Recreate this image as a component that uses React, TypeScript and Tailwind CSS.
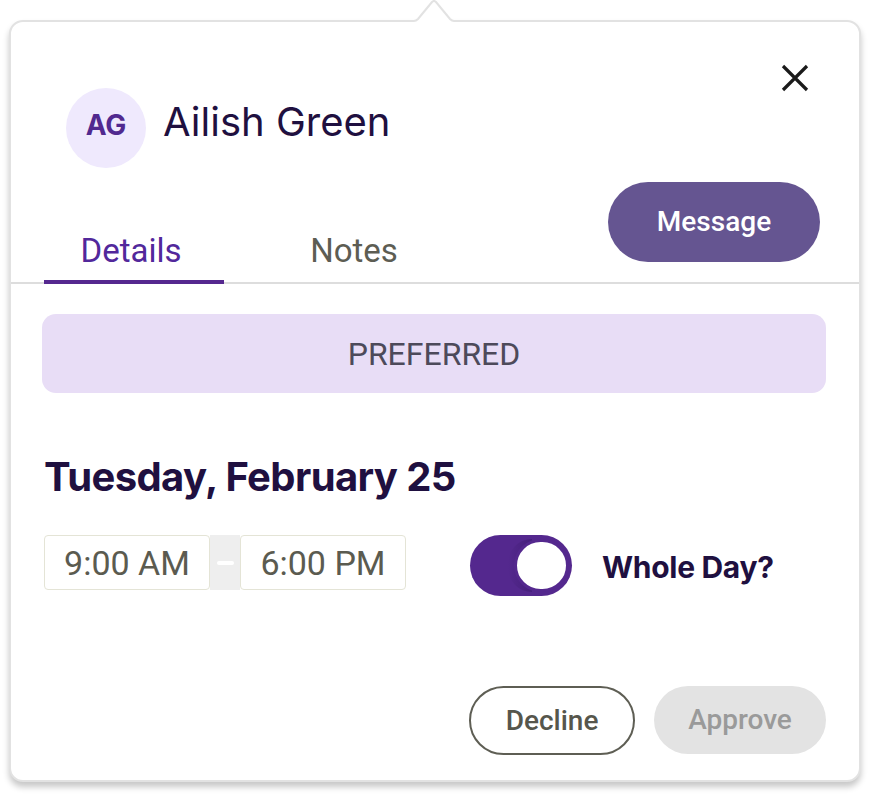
import React from "react";

export default function App() {
  const inter = { fontFamily: "Inter, 'Noto Sans', sans-serif" };
  const roboto = { fontFamily: "Roboto, 'Noto Sans', sans-serif" };
  return (
    <div className="w-[870px] h-[800px] bg-white overflow-hidden">
      <div className="pl-[9px] pt-[20px]">
        <div className="relative w-[852px] h-[762px] bg-white border-2 border-[#e2e2e2] rounded-[14px] shadow-[0_5px_6px_rgba(0,0,0,0.22)]">
          {/* arrow */}
          <svg className="absolute left-[398px] top-[-22px]" width="50" height="24" viewBox="0 0 50 24">
            <path d="M0 24 L0 21 L5 21 Q7 21 9 19 L23 2 Q25 0 27 2 L41 19 Q43 21 45 21 L50 21 L50 24 Z" fill="#ffffff" />
            <path d="M0 21 L5 21 Q7 21 9 19 L23 2 Q25 0 27 2 L41 19 Q43 21 45 21 L50 21" fill="none" stroke="#e2e2e2" strokeWidth="2" />
          </svg>
          {/* close */}
          <button className="absolute left-[770px] top-[42px] w-[28px] h-[28px]">
            <svg width="28" height="28" viewBox="0 0 28 28">
              <path d="M2 2 L26 26 M26 2 L2 26" stroke="#1a1a1a" strokeWidth="3.2" />
            </svg>
          </button>

          {/* header */}
          <div className="pt-[66px] pl-[55px] flex items-start">
            <div
              className="w-[80px] h-[80px] rounded-full bg-[#efe9fd] flex items-center justify-center pb-[6px] text-[28px] font-bold text-[#51298f] leading-none"
              style={inter}
            >
              AG
            </div>
            <div className="ml-[17px] mt-[14px] text-[40px] leading-none text-[#1f1040]" style={inter}>
              Ailish Green
            </div>
          </div>

          {/* tabs row */}
          <div className="mt-[14px] flex items-end justify-between pl-[33px] pr-[39px] border-b-2 border-[#dddddd]">
            <div className="flex items-end">
              <div
                className="w-[180px] -mb-[2px] pb-[13px] border-b-4 border-[#55288f] text-center text-[33px] leading-none text-[#52289b]"
                style={roboto}
              >
                <span className="mr-[6px]">Details</span>
              </div>
              <div
                className="ml-[40px] w-[180px] -mb-[2px] pb-[13px] border-b-4 border-transparent text-center text-[33px] leading-none text-[#5d5d53]"
                style={roboto}
              >
                Notes
              </div>
            </div>
            <button
              className="mb-[20px] w-[212px] h-[80px] rounded-full bg-[#655591] text-white text-[28px] font-medium"
              style={roboto}
            >
              Message
            </button>
          </div>

          {/* banner */}
          <div
            className="mt-[30px] ml-[31px] mr-[33px] h-[79px] rounded-[14px] bg-[#e8ddf6] flex items-center justify-center text-[32px] text-[#4d4a5a] leading-none"
            style={roboto}
          >
            PREFERRED
          </div>

          {/* date */}
          <div className="mt-[64px] pl-[33px] text-[40px] font-bold leading-none text-[#1f1040] tracking-[-0.6px]" style={inter}>
            Tuesday, February 25
          </div>

          {/* time row */}
          <div className="mt-[38px] pl-[33px] flex items-start">
            <div className="flex h-[55px]">
              <div
                className="w-[166px] h-[55px] border border-[#e4e4d6] rounded-[4px] bg-white flex items-center justify-center text-[34px] text-[#5b5b50] leading-none"
                style={roboto}
              >
                9:00 AM
              </div>
              <div className="w-[30px] h-[55px] bg-[#eeeeee] flex items-center justify-center">
                <div className="w-[17px] h-[4px] bg-white rounded-sm" />
              </div>
              <div
                className="w-[166px] h-[55px] border border-[#e4e4d6] rounded-[4px] bg-white flex items-center justify-center text-[34px] text-[#5b5b50] leading-none"
                style={roboto}
              >
                6:00 PM
              </div>
            </div>
            <div className="ml-[64px] flex items-center">
              <div className="relative w-[102px] h-[61px] rounded-full bg-[#54288e] flex items-center justify-end pr-[3px]">
                <div className="absolute right-[40px] top-[4px] w-[24px] h-[53px] bg-gradient-to-r from-transparent to-[#3c1a6e] opacity-60 rounded-l-full" />
                <div className="relative w-[55px] h-[53px] rounded-full bg-white border-[3px] border-[#54288e]" />
              </div>
              <div className="ml-[30px] mt-[3px] text-[30px] font-bold leading-none text-[#1f1040] tracking-[-0.3px]" style={inter}>
                Whole Day?
              </div>
            </div>
          </div>

          {/* buttons */}
          <div className="mt-[90px] pr-[33px] flex justify-end gap-[19px]">
            <button
              className="w-[166px] h-[69px] rounded-full border-2 border-[#5e5e54] bg-white text-[28px] font-medium text-[#56564c]"
              style={roboto}
            >
              Decline
            </button>
            <button
              className="w-[172px] h-[68px] rounded-full bg-[#e3e3e3] text-[28px] font-medium text-[#9a9a9a]"
              style={roboto}
            >
              Approve
            </button>
          </div>
        </div>
      </div>
    </div>
  );
}
